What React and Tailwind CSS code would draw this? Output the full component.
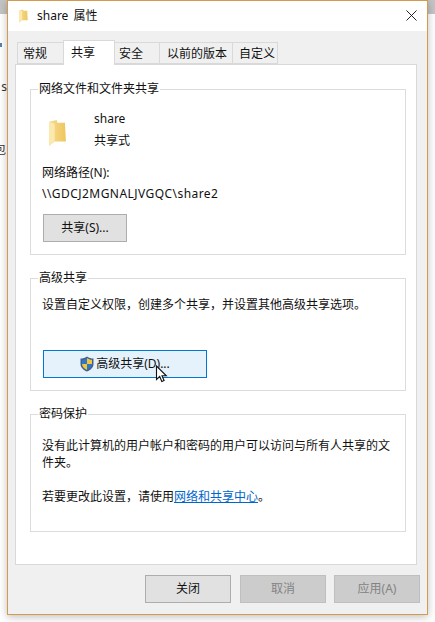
const font = { fontFamily: '"Noto Sans", "Noto Sans CJK SC", sans-serif' };

function Folder({ className }) {
  return (
    <svg viewBox="0 0 20 30" className={className}>
      <defs>
        <linearGradient id="fg" x1="0" y1="0" x2="1" y2="0">
          <stop offset="0" stopColor="#f7dc8f" />
          <stop offset="1" stopColor="#eec65e" />
        </linearGradient>
      </defs>
      <path d="M1 3 L9 1 L10 4 L18 4 L19 24 L7 24 L1 29 Z" fill="url(#fg)" />
      <path d="M1 3 L7 5 L7 24 L1 29 Z" fill="#fbe9b0" />
    </svg>
  );
}

function Shield() {
  return (
    <svg viewBox="0 0 14 16" className="w-[14px] h-[16px] shrink-0">
      <path d="M7 0.5 C9 2 11 2.6 13.5 2.6 V8 C13.5 11.5 10.5 14.2 7 15.5 C3.5 14.2 0.5 11.5 0.5 8 V2.6 C3 2.6 5 2 7 0.5 Z" fill="#3f5f8f" />
      <path d="M7 2 V8 H2 V3.8 C4 3.7 5.5 3.2 7 2 Z" fill="#2f78c4" />
      <path d="M7 2 C8.5 3.2 10 3.7 12 3.8 V8 H7 Z" fill="#f3c53f" />
      <path d="M2 8 H7 V14 C4.5 13 2.2 11 2 8 Z" fill="#f3c53f" />
      <path d="M7 8 H12 C11.8 11 9.5 13 7 14 Z" fill="#2f78c4" />
    </svg>
  );
}

function Group({ title, className, children }) {
  return (
    <fieldset className={`ml-[14px] mr-[10px] border border-[#dcdcdc] ${className}`}>
      <legend className="ml-[7px] px-[1px] text-[12px] leading-[14px] text-[#111]">{title}</legend>
      {children}
    </fieldset>
  );
}

function Btn({ children, className }) {
  return (
    <button className={`h-[28px] border flex items-center justify-center text-[12px] ${className}`}>{children}</button>
  );
}

export default function App() {
  return (
    <div style={font} className="relative w-[435px] h-[622px] bg-white overflow-hidden text-[12px] text-[#111]">
      <div className="absolute left-0 top-0 w-[7px] h-[14px] bg-[#c4c4c4]" />
      <div className="absolute right-0 top-0 w-[7px] h-[14px] bg-[#c4c4c4]" />
      <div className="absolute left-0 top-[43px] w-[2px] h-[4px] bg-[#5b7fa8]" />
      <div className="absolute left-0 top-[80px] w-[7px] text-[12px] leading-[14px] overflow-hidden text-[#333] text-right">s</div>
      <div className="absolute left-[-6px] top-[143px] w-[13px] text-[12px] leading-[14px] overflow-hidden text-[#333]">包</div>
      <div className="absolute left-[7px] top-0 w-[421px] h-[615px] border border-[#d59a4e] bg-[#f0f0f0] shadow-[0_2px_8px_rgba(0,0,0,0.25)] flex flex-col">
        <div className="h-[30px] bg-white flex items-center pl-[10px] pr-[10px] shrink-0">
          <Folder className="w-[11px] h-[14px]" />
          <span className="ml-[8px] text-[12px]">share <span className="ml-[2px]">属性</span></span>
          <svg viewBox="0 0 12 12" className="ml-auto -mt-[1px] w-[11px] h-[11px]">
            <path d="M0.5 0.5 L11.5 11.5 M11.5 0.5 L0.5 11.5" stroke="#111" strokeWidth="1" fill="none" />
          </svg>
        </div>
        <div className="flex pl-[9px] pt-[11px] h-[33px] shrink-0 items-end relative z-10">
          <div className="w-[46px] h-[22px] border border-[#d9d9d9] border-r-0 flex items-center justify-start pl-[5px] pt-[2px]">常规</div>
          <div className="w-[52px] h-[25px] border border-[#d9d9d9] border-b-0 bg-white flex items-start justify-start pl-[7px] pt-[3px] -mb-[1px]">共享</div>
          <div className="w-[45px] h-[22px] border border-[#d9d9d9] border-l-0 flex items-center justify-start pl-[4px] pt-[2px]">安全</div>
          <div className="w-[73px] h-[22px] border border-[#d9d9d9] border-l-0 flex items-center justify-start pl-[7px] pt-[2px]">以前的版本</div>
          <div className="w-[45px] h-[22px] border border-[#d9d9d9] border-l-0 flex items-center justify-start pl-[6px] pt-[2px]">自定义</div>
        </div>
        <div className="ml-[7px] mr-[10px] h-[501px] bg-white border border-[#d9d9d9] shrink-0 pt-[17px]">
          <Group title="网络文件和文件夹共享" className="h-[173px]">
            <div className="flex pl-[17px] pt-[12px]">
              <Folder className="w-[19px] h-[28px] mt-[11px]" />
              <div className="ml-[27px] leading-[22px]">
                <div>share</div>
                <div>共享式</div>
              </div>
            </div>
            <div className="pl-[11px] mt-[10px] leading-[21px]">
              <div>网络路径(N):</div>
              <div className="tracking-[0.45px]">\\GDCJ2MGNALJVGQC\share2</div>
            </div>
            <Btn className="ml-[12px] mt-[10px] w-[84px] border-[#adadad] bg-[#e1e1e1]">共享(S)...</Btn>
          </Group>
          <Group title="高级共享" className="h-[120px] mt-[16px]">
            <div className="pl-[11px] pt-[11px] leading-[18px]">设置自定义权限，创建多个共享，并设置其他高级共享选项。</div>
            <Btn className="relative ml-[12px] mt-[36px] w-[164px] border-[#0078d7] bg-[#e5f1fb] gap-[2px]">
              <Shield />
              <span>高级共享(D)...</span>
              <svg viewBox="0 0 12 19" className="absolute left-[111px] top-[14px] w-[13px] h-[19px]">
                <path d="M1 1 V14.5 L4.2 11.5 L6.3 16.5 L8.6 15.5 L6.5 10.8 L10.8 10.8 Z" fill="#fff" stroke="#111" strokeWidth="1.1" />
              </svg>
            </Btn>
          </Group>
          <Group title="密码保护" className="h-[125px] mt-[16px]">
            <div className="px-[11px] pt-[16px] leading-[17px]">
              <div>没有此计算机的用户帐户和密码的用户可以访问与所有人共享的文件夹。</div>
              <div className="mt-[17px]">
                若要更改此设置，请使用<span className="text-[#0066cc] underline">网络和共享中心</span>。
              </div>
            </div>
          </Group>
        </div>
        <div className="flex gap-[9px] pl-[137px] pt-[10px]">
          <Btn className="w-[86px] border-[#adadad] bg-[#e1e1e1]">关闭</Btn>
          <Btn className="w-[86px] border-[#bfbfbf] bg-[#cccccc] text-[#838383]">取消</Btn>
          <Btn className="w-[86px] border-[#bfbfbf] bg-[#cccccc] text-[#838383] -ml-[1px]">应用(A)</Btn>
        </div>
      </div>
    </div>
  );
}
